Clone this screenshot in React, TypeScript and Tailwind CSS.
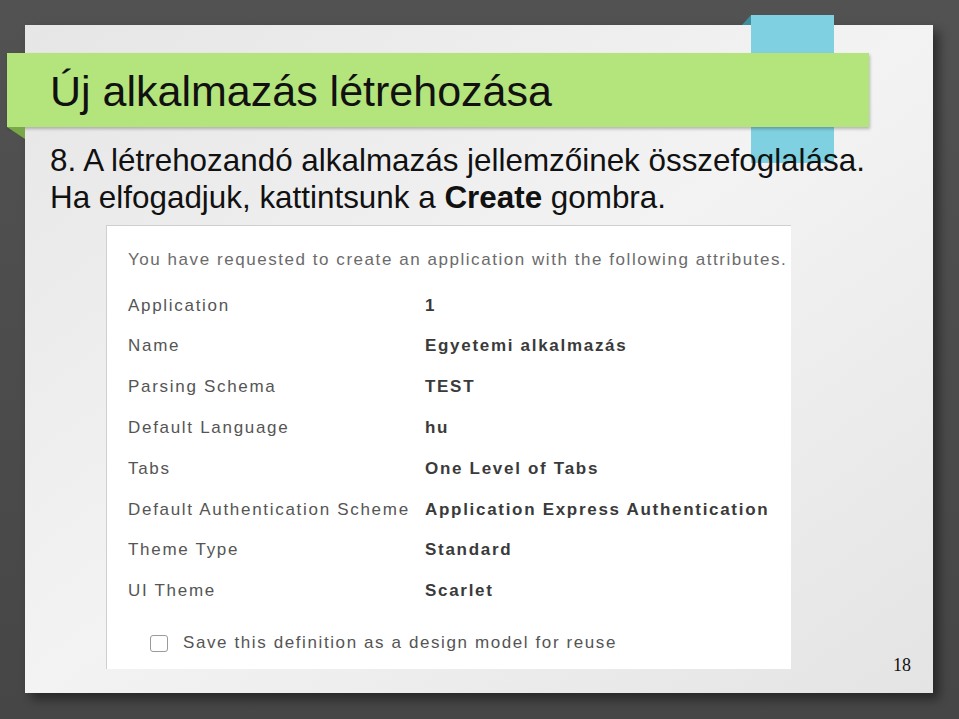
import React from 'react';

interface Attr {
  label: string;
  value: string;
}

const attrs: Attr[] = [
  { label: 'Application', value: '1' },
  { label: 'Name', value: 'Egyetemi alkalmazás' },
  { label: 'Parsing Schema', value: 'TEST' },
  { label: 'Default Language', value: 'hu' },
  { label: 'Tabs', value: 'One Level of Tabs' },
  { label: 'Default Authentication Scheme', value: 'Application Express Authentication' },
  { label: 'Theme Type', value: 'Standard' },
  { label: 'UI Theme', value: 'Scarlet' },
];

const sans = "font-['Liberation_Sans',Arial,sans-serif]";

export default function App() {
  return (
    <div className="w-[959px] h-[719px] overflow-hidden bg-gradient-to-b from-[#525252] to-[#464646] pt-[25px] pl-[25px]">
      {/* slide */}
      <div className="relative w-[908px] h-[668px] bg-gradient-to-br from-[#e6e6e6] via-[#f3f3f3] to-[#e4e4e4] shadow-[6px_6px_10px_rgba(0,0,0,0.45)] flex flex-col">
        {/* blue bookmark tab */}
        <div className="absolute left-[726px] top-[-10px] w-[83px] h-[148px] bg-[#7fd0e0]" />
        <div className="absolute left-[717px] top-[-10px] w-[9px] h-[10px] bg-[#3f8e9e] [clip-path:polygon(100%_0,100%_100%,0_100%)]" />

        {/* green title ribbon */}
        <div className="relative z-10 mt-[28px] -ml-[18px] w-[862px] h-[74px] bg-[#b4e47c] shadow-[1px_2px_3px_rgba(0,0,0,0.25)] flex items-center pl-[43px]">
          <h1 className={`${sans} text-[43px] leading-none text-[#111] pt-[2px]`}>Új alkalmazás létrehozása</h1>
          <div className="absolute left-0 top-full w-[18px] h-[12px] bg-[#78a848] [clip-path:polygon(0_0,100%_0,100%_100%)]" />
        </div>

        {/* body text */}
        <div className={`relative z-10 ml-[25px] mt-[15px] ${sans} text-[31.4px] leading-[37px] text-[#111]`}>
          <p>8. A létrehozandó alkalmazás jellemzőinek összefoglalása.</p>
          <p>
            Ha elfogadjuk, kattintsunk a <b>Create</b> gombra.
          </p>
        </div>

        {/* screenshot */}
        <div className={`ml-[81px] mt-[9px] w-[685px] h-[444px] bg-white border-l border-t border-[#cfcfcf] ${sans} text-[17px] tracking-[1.7px] whitespace-nowrap`}>
          <p className="pl-[21px] pt-[24px] text-[#6b6b6b] leading-[20px] tracking-[1.55px]">
            You have requested to create an application with the following attributes.
          </p>
          <div className="mt-[15px] flex flex-col">
            {attrs.map((a) => (
              <div key={a.label} className="flex items-center h-[40.8px]">
                <div className="pl-[21px] w-[318px] text-[#555]">{a.label}</div>
                <div className="font-bold text-[#3a3a3a]">{a.value}</div>
              </div>
            ))}
          </div>
          <label className="mt-[19px] ml-[43px] flex items-center gap-[15px] text-[#555] tracking-[1.6px]">
            <span className="w-[18px] h-[17px] rounded-[3px] border border-[#9a9a9a] bg-white" />
            <span>Save this definition as a design model for reuse</span>
          </label>
        </div>

        {/* page number */}
        <div className="absolute right-[22px] bottom-[14px] font-['Liberation_Serif',serif] text-[18px] text-[#111]">18</div>
      </div>
    </div>
  );
}
